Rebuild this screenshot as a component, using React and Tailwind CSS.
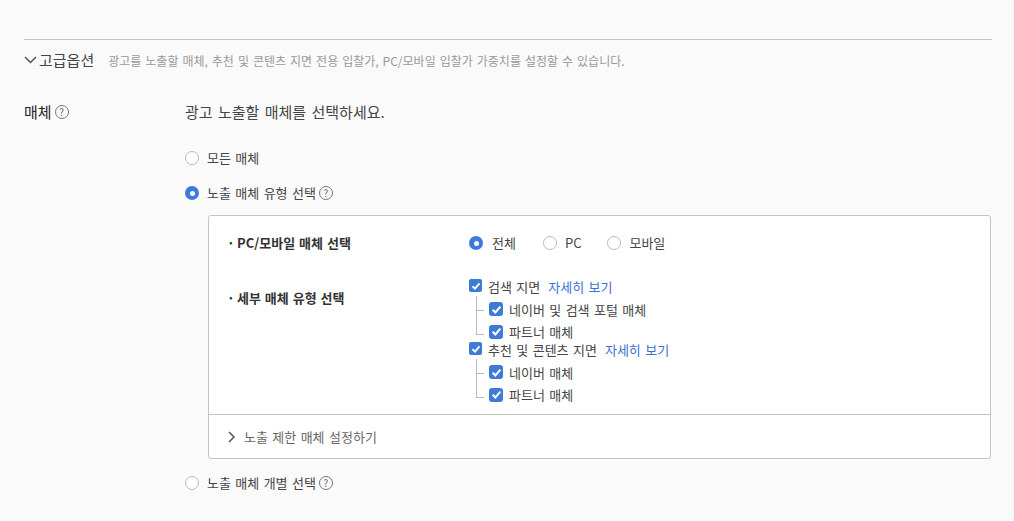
import React from 'react';

const Help = () => (
  <span className="inline-flex w-[14px] h-[14px] rounded-full border border-[#777] items-center justify-center text-[10px] leading-none text-[#666] shrink-0">?</span>
);

const Radio = ({ checked }) =>
  checked ? (
    <span className="w-[14px] h-[14px] rounded-full bg-[#3e7bd9] flex items-center justify-center shrink-0">
      <span className="w-[5px] h-[5px] rounded-full bg-white" />
    </span>
  ) : (
    <span className="w-[14px] h-[14px] rounded-full border border-[#bbb] bg-white shrink-0" />
  );

const Check = ({ sub }) => (
  <span className={`bg-[#3e7bd9] flex items-center justify-center shrink-0 ${sub ? 'w-[14px] h-[14px] rounded-[3px]' : 'w-[13px] h-[13px] rounded-[2px]'}`}>
    <svg width={sub ? 11 : 10} height={sub ? 11 : 10} viewBox="0 0 10 10" fill="none">
      <path d="M1.5 5.2 L4 7.6 L8.5 2.4" stroke="#fff" strokeWidth="1.9" />
    </svg>
  </span>
);

const Sub = ({ label, last }) => (
  <div className="relative flex items-center h-[22.5px] pl-[20px]">
    <span className={`absolute left-[7px] w-[8px] border-l border-b border-[#bbb] ${last ? 'top-[-10px] h-[24px]' : 'top-[-2px] h-[15px]'}`} />
    <Check sub />
    <span className="ml-[6px] text-[13px] leading-[17px] text-[#444] [word-spacing:1.5px]">{label}</span>
  </div>
);

const Group = ({ label, subs }) => (
  <div>
    <div className="flex items-center h-[17px]">
      <Check />
      <span className="ml-[6px] mt-[2px] text-[13px] leading-[15px] text-[#444] [word-spacing:1.5px]">{label}</span>
      <span className="ml-[8px] mt-[2px] text-[13px] leading-[15px] text-[#3d6fd6] [word-spacing:1.5px]">자세히 보기</span>
    </div>
    <div className="mt-[4px]">
      {subs.map((s, i) => (
        <Sub key={s} label={s} last={i === subs.length - 1} />
      ))}
    </div>
  </div>
);

export default function App() {
  return (
    <div className="w-[1014px] h-[521px] overflow-hidden bg-[#fafafa] px-[24px] pt-[39px] text-[#333] font-['Noto_Sans_CJK_KR',sans-serif]">
      <div className="w-[968px] border-t border-[#c4c4c4]">
        <div className="flex items-center h-[40px]">
          <svg width="14" height="14" viewBox="0 0 14 14" fill="none" className="shrink-0">
            <path d="M1 4 L6.5 9.5 L12 4" stroke="#555" strokeWidth="1.5" />
          </svg>
          <span className="ml-[1px] text-[15px] text-[#444]">고급옵션</span>
          <span className="ml-[14px] mt-[2px] text-[12px] text-[#999] [word-spacing:1.3px]">광고를 노출할 매체, 추천 및 콘텐츠 지면 전용 입찰가, PC/모바일 입찰가 가중치를 설정할 수 있습니다.</span>
        </div>

        <div className="flex mt-[19px]">
          <div className="w-[161px] flex items-center h-[26px] gap-[3px]">
            <span className="text-[15px] text-[#222]">매체</span>
            <Help />
          </div>
          <div className="flex-1">
            <div className="h-[26px] flex items-center text-[15px] text-[#444] [word-spacing:2px]">광고 노출할 매체를 선택하세요.</div>

            <div className="flex items-center h-[20px] mt-[23px]">
              <Radio />
              <span className="ml-[8px] text-[13px] text-[#444] [word-spacing:1.5px]">모든 매체</span>
            </div>

            <div className="flex items-center h-[20px] mt-[15px]">
              <Radio checked />
              <span className="ml-[8px] text-[13px] text-[#444] [word-spacing:1.5px]">노출 매체 유형 선택</span>
              <span className="ml-[3px] flex"><Help /></span>
            </div>

            <div className="ml-[23px] mt-[12px] w-[783px] bg-white border border-[#c4c4c4] rounded-[3px]">
              <div className="px-[18px] pt-[17px] pb-[8px]">
                <div className="flex items-center h-[20px]">
                  <span className="w-[242px] flex text-[13px] font-bold text-[#333] [word-spacing:1px]">
                    <span className="w-[10px]">·</span>PC/모바일 매체 선택
                  </span>
                  <Radio checked />
                  <span className="ml-[9px] text-[13px] text-[#444]">전체</span>
                  <span className="ml-[27px] flex"><Radio /></span>
                  <span className="ml-[8px] text-[13px] text-[#444]">PC</span>
                  <span className="ml-[26px] flex"><Radio /></span>
                  <span className="ml-[8px] text-[13px] text-[#444]">모바일</span>
                </div>
                <div className="flex mt-[24px]">
                  <span className="w-[242px] h-fit flex text-[13px] font-bold text-[#333] mt-[11px] [word-spacing:1px]">
                    <span className="w-[10px]">·</span>세부 매체 유형 선택
                  </span>
                  <div className="flex flex-col">
                    <Group label="검색 지면" subs={['네이버 및 검색 포털 매체', '파트너 매체']} />
                    <div className="-mt-[3px]">
                      <Group label="추천 및 콘텐츠 지면" subs={['네이버 매체', '파트너 매체']} />
                    </div>
                  </div>
                </div>
              </div>
              <div className="border-t border-[#c4c4c4] h-[44px] px-[18px] flex items-center">
                <svg width="10" height="12" viewBox="0 0 10 12" fill="none" className="shrink-0">
                  <path d="M2 1 L7 6 L2 11" stroke="#555" strokeWidth="1.5" />
                </svg>
                <span className="ml-[7px] text-[13px] text-[#666] [word-spacing:1.5px]">노출 제한 매체 설정하기</span>
              </div>
            </div>

            <div className="flex items-center h-[20px] mt-[14px]">
              <Radio />
              <span className="ml-[8px] text-[13px] text-[#444] [word-spacing:1.5px]">노출 매체 개별 선택</span>
              <span className="ml-[3px] flex"><Help /></span>
            </div>
          </div>
        </div>
      </div>
    </div>
  );
}
